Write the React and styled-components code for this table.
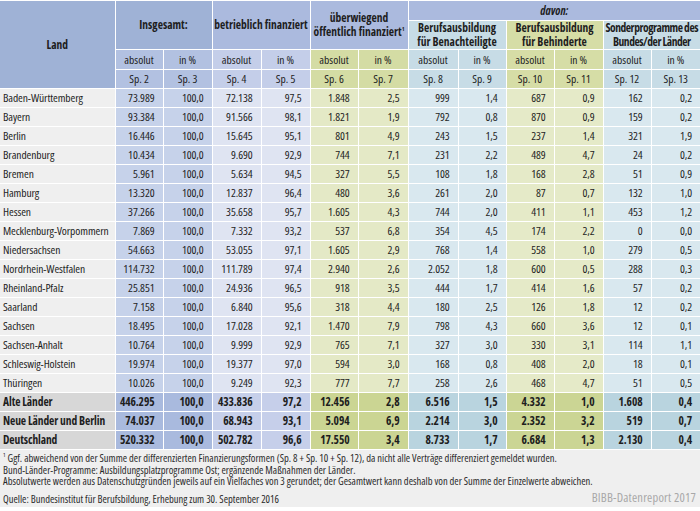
import React from 'react';
import styled, { createGlobalStyle } from 'styled-components';

const GlobalStyle = createGlobalStyle`
  html, body { margin: 0; padding: 0; background: #ffffff; }
  body {
    font-family: "Open Sans", "DejaVu Sans Condensed", "Liberation Sans", sans-serif;
    font-stretch: 75%;
    color: #1e1e1e;
  }
`;

const palette = {
  land: { head: '#9fb2d6', sub: '#9fb2d6', data: '#efefef', sum: '#d7d7d7' },
  ins: { head: '#9fb2d6', sub: '#b2c1e1', data: '#c6d2ea', sum: '#a9bade' },
  bet: { head: '#abbade', sub: '#c4cee9', data: '#dfe4f2', sum: '#c6cfea' },
  oef: { head: '#abbade', sub: '#d4dca4', data: '#e4e9c6', sum: '#cbd593' },
  ben: { head: '#c7dce6', sub: '#c7dce6', data: '#d9e8ef', sum: '#b9d4df' },
  beh: { head: '#d6dda6', sub: '#d6dda6', data: '#e5eac8', sum: '#cbd594' },
  son: { head: '#c7dce6', sub: '#c7dce6', data: '#d9e8ef', sum: '#b9d4df' },
  davon: { head: '#abbade' },
};

const groups = ['ins', 'ins', 'bet', 'bet', 'oef', 'oef', 'ben', 'ben', 'beh', 'beh', 'son', 'son'];
const widths = [115, 48, 49, 49, 49, 48, 50, 50, 48, 48, 49, 48, 49];

const rows = [
  ['Baden-Württemberg', '73.989', '100,0', '72.138', '97,5', '1.848', '2,5', '999', '1,4', '687', '0,9', '162', '0,2'],
  ['Bayern', '93.384', '100,0', '91.566', '98,1', '1.821', '1,9', '792', '0,8', '870', '0,9', '159', '0,2'],
  ['Berlin', '16.446', '100,0', '15.645', '95,1', '801', '4,9', '243', '1,5', '237', '1,4', '321', '1,9'],
  ['Brandenburg', '10.434', '100,0', '9.690', '92,9', '744', '7,1', '231', '2,2', '489', '4,7', '24', '0,2'],
  ['Bremen', '5.961', '100,0', '5.634', '94,5', '327', '5,5', '108', '1,8', '168', '2,8', '51', '0,9'],
  ['Hamburg', '13.320', '100,0', '12.837', '96,4', '480', '3,6', '261', '2,0', '87', '0,7', '132', '1,0'],
  ['Hessen', '37.266', '100,0', '35.658', '95,7', '1.605', '4,3', '744', '2,0', '411', '1,1', '453', '1,2'],
  ['Mecklenburg-Vorpommern', '7.869', '100,0', '7.332', '93,2', '537', '6,8', '354', '4,5', '174', '2,2', '0', '0,0'],
  ['Niedersachsen', '54.663', '100,0', '53.055', '97,1', '1.605', '2,9', '768', '1,4', '558', '1,0', '279', '0,5'],
  ['Nordrhein-Westfalen', '114.732', '100,0', '111.789', '97,4', '2.940', '2,6', '2.052', '1,8', '600', '0,5', '288', '0,3'],
  ['Rheinland-Pfalz', '25.851', '100,0', '24.936', '96,5', '918', '3,5', '444', '1,7', '414', '1,6', '57', '0,2'],
  ['Saarland', '7.158', '100,0', '6.840', '95,6', '318', '4,4', '180', '2,5', '126', '1,8', '12', '0,2'],
  ['Sachsen', '18.495', '100,0', '17.028', '92,1', '1.470', '7,9', '798', '4,3', '660', '3,6', '12', '0,1'],
  ['Sachsen-Anhalt', '10.764', '100,0', '9.999', '92,9', '765', '7,1', '327', '3,0', '330', '3,1', '114', '1,1'],
  ['Schleswig-Holstein', '19.974', '100,0', '19.377', '97,0', '594', '3,0', '168', '0,8', '408', '2,0', '18', '0,1'],
  ['Thüringen', '10.026', '100,0', '9.249', '92,3', '777', '7,7', '258', '2,6', '468', '4,7', '51', '0,5'],
];

const sums = [
  ['Alte Länder', '446.295', '100,0', '433.836', '97,2', '12.456', '2,8', '6.516', '1,5', '4.332', '1,0', '1.608', '0,4'],
  ['Neue Länder und Berlin', '74.037', '100,0', '68.943', '93,1', '5.094', '6,9', '2.214', '3,0', '2.352', '3,2', '519', '0,7'],
  ['Deutschland', '520.332', '100,0', '502.782', '96,6', '17.550', '3,4', '8.733', '1,7', '6.684', '1,3', '2.130', '0,4'],
];

const Page = styled.div`
  width: 700px;
  height: 511px;
  overflow: hidden;
  background: #ffffff;
`;

const Table = styled.table`
  width: 700px;
  table-layout: fixed;
  border-collapse: collapse;
`;

const Row = styled.tr`
  height: ${p => p.$h}px;
`;

const Cell = styled.td`
  background: ${p => p.$bg};
  border: 1px solid #ffffff;
  padding: 0 ${p => (p.$align === 'right' ? '8px' : '1px')} 0 ${p => (p.$align === 'left' ? '3px' : '1px')};
  text-align: ${p => p.$align || 'center'};
  font-size: 11.5px;
  font-weight: ${p => (p.$bold ? 700 : 400)};
  font-style: ${p => (p.$italic ? 'italic' : 'normal')};
  letter-spacing: ${p => (p.$tight ? '-0.45px' : p.$head ? 'normal' : '-0.1px')};
  line-height: 14px;
  white-space: nowrap;
  overflow: visible;
  vertical-align: middle;
  &:first-child { border-left: none; }
  &:last-child { border-right: none; }
`;

const Sup = styled.sup`
  font-size: 6px;
  vertical-align: 5px;
  line-height: 0;
`;

const Footer = styled.div`
  background: #efefef;
  padding: 3px 3px 2px 3px;
  font-size: 10.5px;
  line-height: 11.5px;
  color: #2a2a2a;
`;

const Note = styled.div`
  white-space: nowrap;
`;

const SourceLine = styled.div`
  display: flex;
  justify-content: space-between;
  align-items: flex-end;
  margin-top: 4px;
`;

const Brand = styled.span`
  font-size: 12.5px;
  color: #a8a8a8;
  letter-spacing: 0.2px;
  margin-bottom: 2px;
  margin-right: 1px;
`;

function DataRow({ cells, summary }) {
  return (
    <Row $h={19}>
      {cells.map((c, i) => {
        const g = i === 0 ? palette.land : palette[groups[i - 1]];
        return (
          <Cell
            key={i}
            $bg={summary ? g.sum : g.data}
            $align={i === 0 ? 'left' : 'right'}
            $bold={summary}
          >
            {c}
          </Cell>
        );
      })}
    </Row>
  );
}

export default function App() {
  return (
    <Page>
      <GlobalStyle />
      <Table>
        <colgroup>
          {widths.map((w, i) => <col key={i} style={{ width: w }} />)}
        </colgroup>
        <thead>
          <Row $h={20}>
            <Cell rowSpan={4} $bg={palette.land.head} $bold $head>Land</Cell>
            <Cell rowSpan={2} colSpan={2} $bg={palette.ins.head} $bold $head>Insgesamt:</Cell>
            <Cell rowSpan={2} colSpan={2} $bg={palette.bet.head} $bold $head>betrieblich finanziert</Cell>
            <Cell rowSpan={2} colSpan={2} $bg={palette.oef.head} $bold $head>
              überwiegend<br />öffentlich finanziert<Sup>1</Sup>
            </Cell>
            <Cell colSpan={6} $bg={palette.davon.head} $bold $italic $head>davon:</Cell>
          </Row>
          <Row $h={28}>
            <Cell colSpan={2} $bg={palette.ben.head} $bold $head>Berufsausbildung<br />für Benachteiligte</Cell>
            <Cell colSpan={2} $bg={palette.beh.head} $bold $head>Berufsausbildung<br />für Behinderte</Cell>
            <Cell colSpan={2} $bg={palette.son.head} $bold $head $tight>Sonderprogramme des<br />Bundes/der Länder</Cell>
          </Row>
          <Row $h={20}>
            {groups.map((g, i) => (
              <Cell key={i} $bg={palette[g].sub} $head>{i % 2 === 0 ? 'absolut' : 'in %'}</Cell>
            ))}
          </Row>
          <Row $h={19}>
            {groups.map((g, i) => (
              <Cell key={i} $bg={palette[g].sub} $head>Sp. {i + 2}</Cell>
            ))}
          </Row>
        </thead>
        <tbody>
          {rows.map((r, i) => <DataRow key={i} cells={r} />)}
          {sums.map((r, i) => <DataRow key={i} cells={r} summary />)}
        </tbody>
      </Table>
      <Footer>
        <Note><Sup>1</Sup> Ggf. abweichend von der Summe der differenzierten Finanzierungsformen (Sp. 8 + Sp. 10 + Sp. 12), da nicht alle Verträge differenziert gemeldet wurden.</Note>
        <Note>Bund-Länder-Programme: Ausbildungsplatzprogramme Ost; ergänzende Maßnahmen der Länder.</Note>
        <Note>Absolutwerte werden aus Datenschutzgründen jeweils auf ein Vielfaches von 3 gerundet; der Gesamtwert kann deshalb von der Summe der Einzelwerte abweichen.</Note>
        <SourceLine>
          <Note>Quelle: Bundesinstitut für Berufsbildung, Erhebung zum 30. September 2016</Note>
          <Brand>BIBB-Datenreport 2017</Brand>
        </SourceLine>
      </Footer>
    </Page>
  );
}
